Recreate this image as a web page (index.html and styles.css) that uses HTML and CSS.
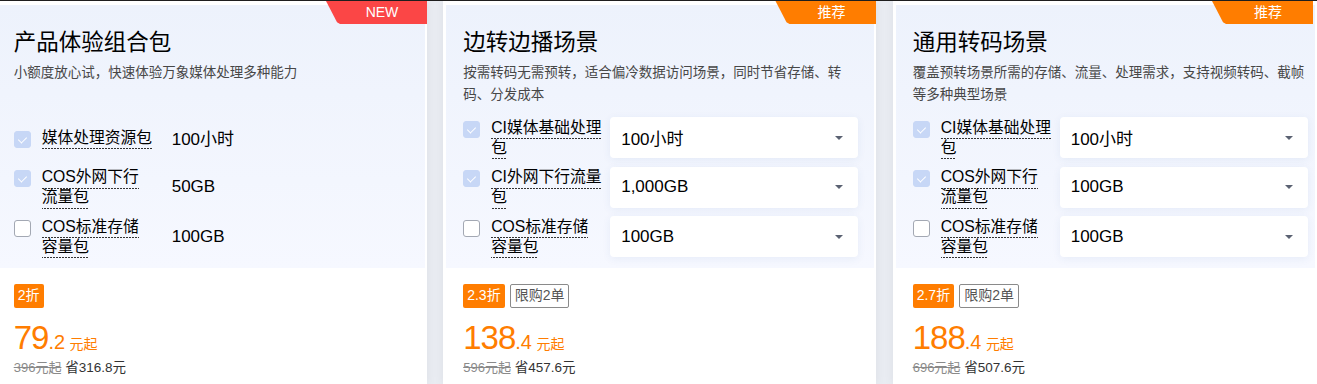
FILE: index.html
```html
<!DOCTYPE html>
<html lang="zh-CN">
<head>
  <meta charset="UTF-8">
  <meta name="viewport" content="width=device-width, initial-scale=1.0">
  <title>万象媒体处理资源包</title>
  <link rel="stylesheet" href="styles.css">
</head>
<body>
  <div class="cards">
    <div class="card">
      <div class="badge badge-new">NEW</div>
      <div class="card-top">
        <h2 class="card-title">产品体验组合包</h2>
        <p class="card-desc">小额度放心试，快速体验万象媒体处理多种能力</p>
        <div class="rows">
          <div class="row">
            <div class="item"><span class="check on"></span><div class="name"><span>媒体处理资源包</span></div></div>
            <div class="select plain">100小时</div>
          </div>
          <div class="row">
            <div class="item"><span class="check on"></span><div class="name"><span>COS外网下行流量包</span></div></div>
            <div class="select plain">50GB</div>
          </div>
          <div class="row">
            <div class="item"><span class="check"></span><div class="name"><span>COS标准存储容量包</span></div></div>
            <div class="select plain">100GB</div>
          </div>
        </div>
      </div>
      <div class="card-bottom">
        <div class="tags"><span class="tag">2折</span></div>
        <div class="price"><span class="int">79</span><span class="dec">.2</span> <span class="unit">元起</span></div>
        <div class="origin"><s>396元起</s> 省316.8元</div>
      </div>
    </div>

    <div class="card">
      <div class="badge">推荐</div>
      <div class="card-top">
        <h2 class="card-title">边转边播场景</h2>
        <p class="card-desc">按需转码无需预转，适合偏冷数据访问场景，同时节省存储、转码、分发成本</p>
        <div class="rows">
          <div class="row">
            <div class="item"><span class="check on"></span><div class="name"><span>CI媒体基础处理包</span></div></div>
            <div class="select">100小时<i class="caret"></i></div>
          </div>
          <div class="row">
            <div class="item"><span class="check on"></span><div class="name"><span>CI外网下行流量包</span></div></div>
            <div class="select">1,000GB<i class="caret"></i></div>
          </div>
          <div class="row">
            <div class="item"><span class="check"></span><div class="name"><span>COS标准存储容量包</span></div></div>
            <div class="select">100GB<i class="caret"></i></div>
          </div>
        </div>
      </div>
      <div class="card-bottom">
        <div class="tags"><span class="tag">2.3折</span><span class="tag line">限购2单</span></div>
        <div class="price"><span class="int">138</span><span class="dec">.4</span> <span class="unit">元起</span></div>
        <div class="origin"><s>596元起</s> 省457.6元</div>
      </div>
    </div>

    <div class="card">
      <div class="badge">推荐</div>
      <div class="card-top">
        <h2 class="card-title">通用转码场景</h2>
        <p class="card-desc">覆盖预转场景所需的存储、流量、处理需求，支持视频转码、截帧等多种典型场景</p>
        <div class="rows">
          <div class="row">
            <div class="item"><span class="check on"></span><div class="name"><span>CI媒体基础处理包</span></div></div>
            <div class="select">100小时<i class="caret"></i></div>
          </div>
          <div class="row">
            <div class="item"><span class="check on"></span><div class="name"><span>COS外网下行流量包</span></div></div>
            <div class="select">100GB<i class="caret"></i></div>
          </div>
          <div class="row">
            <div class="item"><span class="check"></span><div class="name"><span>COS标准存储容量包</span></div></div>
            <div class="select">100GB<i class="caret"></i></div>
          </div>
        </div>
      </div>
      <div class="card-bottom">
        <div class="tags"><span class="tag">2.7折</span><span class="tag line">限购2单</span></div>
        <div class="price"><span class="int">188</span><span class="dec">.4</span> <span class="unit">元起</span></div>
        <div class="origin"><s>696元起</s> 省507.6元</div>
      </div>
    </div>
  </div>
</body>
</html>
```

FILE: styles.css
```css
html, body {
  margin: 0;
  padding: 0;
  height: 100%;
  overflow: hidden;
}
body {
  font-family: 'Liberation Sans', 'Noto Sans CJK SC', sans-serif;
  background-color: #e9ecf2;
  border-top: 1px solid #1e1e1e;
  box-sizing: border-box;
  color: #000;
}
.cards {
  display: flex;
  gap: 16.2px;
  margin-left: -6.3px;
  height: 383px;
}
.card {
  flex: 0 0 433.3px;
  position: relative;
  box-sizing: border-box;
  padding: 4px 2px 0 3px;
  background: #fff;
  box-shadow: 0 0 10px rgba(0, 0, 0, 0.06);
}
.card:last-child {
  flex: 1 1 0;
  min-width: 0;
}
.badge {
  position: absolute;
  top: 0;
  right: 0;
  width: 101px;
  height: 23px;
  box-sizing: border-box;
  padding-left: 11px;
  background: #ff7d00;
  color: #fff;
  font-size: 14px;
  line-height: 23px;
  text-align: center;
  clip-path: polygon(0 0, 100% 0, 100% 100%, 14px 100%, 11px 92%);
}
.badge-new {
  background: #fb4646;
}
.card:last-child .badge {
  right: 4px;
}
.card-top {
  padding: 22.5px 0 11px 17px;
  background: linear-gradient(180deg, #edf2fc, #f6f8ff);
}
.card-title {
  margin: 0;
  font-size: 22.5px;
  font-weight: 400;
  line-height: 30px;
}
.card-desc {
  margin: 4px 0 0;
  max-width: 396px;
  height: 44px;
  font-size: 13.5px;
  line-height: 22px;
  color: #474747;
}
.rows {
  margin-top: 11.5px;
  display: flex;
  flex-direction: column;
  gap: 8.5px;
}
.row {
  display: flex;
  align-items: center;
  height: 41px;
}
.item {
  display: flex;
  align-items: flex-start;
  width: 147px;
  flex: none;
}
.check {
  flex: none;
  position: relative;
  width: 17px;
  height: 17px;
  margin-top: 3px;
  box-sizing: border-box;
  border: 1px solid #a3a8b3;
  border-radius: 3px;
  background: #fff;
}
.check.on {
  border-color: #c7d7f6;
  background: #c7d7f6;
}
.check.on::after {
  content: "";
  position: absolute;
  left: 5px;
  top: 3px;
  width: 4px;
  height: 7px;
  border: solid #fff;
  border-width: 0 1.5px 1.5px 0;
  transform: rotate(45deg);
}
.name {
  width: 111.5px;
  margin-left: 11px;
  font-size: 15.75px;
  line-height: 20px;
}
.name span {
  padding-bottom: 3.5px;
  background: repeating-linear-gradient(to right, #333 0 2px, transparent 2px 3px) left bottom / 100% 1px no-repeat;
}
.select {
  flex: none;
  width: 248px;
  height: 41px;
  box-sizing: border-box;
  padding: 0 11px;
  display: flex;
  align-items: center;
  justify-content: space-between;
  background: #fff;
  border-radius: 4px;
  box-shadow: 0 2px 8px rgba(40, 80, 160, 0.07);
  font-size: 17px;
}
.select.plain {
  background: transparent;
  box-shadow: none;
}
.caret {
  width: 0;
  height: 0;
  margin-right: 4px;
  border-top: 4px solid #5b6272;
  border-left: 4px solid transparent;
  border-right: 4px solid transparent;
}
.card-bottom {
  padding: 16px 0 0 17px;
}
.tags {
  display: flex;
  gap: 5px;
}
.tag {
  height: 23.5px;
  padding: 0 4px;
  box-sizing: border-box;
  background: #ff7d00;
  color: #fff;
  border-radius: 2px;
  font-size: 14px;
  line-height: 23.5px;
}
.tag.line {
  background: #fff;
  color: #555;
  border: 1px solid #8a8a8a;
  line-height: 21.5px;
}
.price {
  margin-top: 12px;
  height: 36px;
  line-height: 36px;
  color: #ff7d00;
  white-space: nowrap;
}
.price .int {
  font-size: 33px;
  letter-spacing: -1px;
}
.price .dec {
  font-size: 20px;
  line-height: 1;
}
.price .unit {
  font-size: 14px;
  line-height: 1;
}
.origin {
  margin-top: 3.4px;
  font-size: 13.5px;
  line-height: 18px;
  color: #333;
}
.origin s {
  font-size: 13px;
  color: #8a8a8a;
}
```
